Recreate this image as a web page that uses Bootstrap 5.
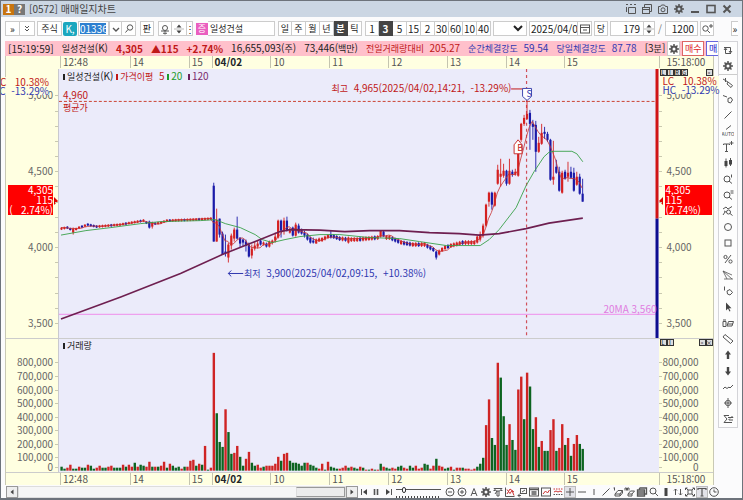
<!DOCTYPE html>
<html lang="ko">
<head>
<meta charset="utf-8">
<meta name="viewport" content="width=device-width, initial-scale=1">
<title>[0572] 매매일지차트</title>
<link href="https://cdn.jsdelivr.net/npm/bootstrap@5.3.0/dist/css/bootstrap.min.css" rel="stylesheet">
<style>
body{font:10px/12px "Liberation Sans Narrow","Noto Sans CJK KR",sans-serif;color:#222;background:#fbfbfc;border:1px solid #6d737b;border-bottom-width:2px;overflow:hidden}
.ko{font-size:9px}
button,input,select{font:inherit;color:inherit;padding:0;margin:0;border-radius:0;min-width:0}
button{background:none;border:0;display:inline-flex;align-items:center;justify-content:center}
svg{display:block;flex:none}
.ic{width:12px;height:12px;fill:none;stroke:#555;stroke-width:1}
.ic .f{fill:#444;stroke:none}
.titlebar{background:#cbd6e3;height:16px;padding:0 9px 0 2px;color:#444}
.titlebar .num{width:11px;height:11px;background:#c87510;color:#fff;font-weight:bold}
.titlebar .hlp{background:#777}
.toolbar{height:24px;padding:0 4px 1px 4px}
.box{border:1px solid #ccc;background:#fff;height:15px;flex:none}
.w13{width:13px}.w14{width:14px}.w15{width:15px}
.seg button{flex:none;width:14px;height:15px;border:1px solid #ccc;border-left-width:0;background:#fff}
.seg button:first-child{border-left-width:1px}
.seg button.on{background:#444;color:#fff;font-weight:bold;border-color:#444}
.infobar{background:#ffc0cb;height:15px;padding:0 1px 0 3px;gap:8px;white-space:nowrap}
.red{color:#c01818}.blue{color:#3038b0}
.chart{display:grid;grid-template-columns:52px 1fr 54px;grid-template-rows:13px 270fr 134fr 13px;background:#ffffe1;border:solid #c9c9b4;border-width:0 1px}
.chart>div{position:relative;min-width:0;min-height:0}
.plot{background:#ebebfa;border-left:1px solid #c9c9cf}
.plot>svg{position:absolute;width:100%;height:100%;left:0;top:0}
.pane2{border-top:1px solid #ccc}
.tick{position:absolute;line-height:12px;padding-left:2px;border-left:1px solid #c4c4b0;color:#555;white-space:nowrap}
.top-t .tick{top:0}
.pl{position:absolute;transform:translateY(-50%);color:#666;white-space:nowrap}
.lft .pl{right:5px}.rgt .pl{left:8px}.rgt.vol .pl{left:auto;right:14px}
.tk{position:absolute;height:1px;width:3px;background:#c9c9b0}
.lft .tk{right:0}.rgt .tk{left:0}
.note{position:absolute;white-space:nowrap}
.lchc{position:absolute;top:8px;background:#ffffe1;line-height:9px;z-index:2;white-space:pre}
.lft .lchc{right:9px}.rgt .lchc{left:4px;top:7px}
.pbox{position:absolute;top:116px;background:red;color:#fff;line-height:10px;z-index:2;white-space:pre}
.lft .pbox{left:2px;right:5px;text-align:right}.rgt .pbox{left:6px;right:1px;padding-left:1px}
.arr{position:absolute;top:128px;border:solid transparent;border-width:4px 0}
.lft .arr{right:0;border-left:4px solid #d00}.rgt .arr{left:0;border-right:4px solid #d00}
.mini{position:absolute;top:0;left:1px;right:0}
.mini button{width:7px;height:7px;background:#ddd;border:1px solid #333;font-size:6px;line-height:5px;color:#111}
.lg{width:2px;height:6px;display:inline-block;margin-right:2px}
.botbar{height:13px;padding-left:1px}
.botbar button.tl{width:12px;height:12px;flex:none}
.botbar .on{background:#e2e2e8;border:1px solid #bbb}
.sb{background:#eee;border:1px solid #999;width:12px;height:12px}
.track{background:#f6f6f6;border:1px solid #ddd;height:12px}
.thumb{width:49px;background:#ececec;border:1px solid #999;border-left-color:#ddd}
.zoomr{width:45px;height:12px;appearance:none;background:repeating-linear-gradient(90deg,#444 0 1px,transparent 1px 3px) 0 10px/100% 2px no-repeat,linear-gradient(#555,#555) 0 3px/100% 1px no-repeat}
.zoomr::-webkit-slider-thumb{appearance:none;width:4px;height:6px;border:1px solid #333;background:#fff;border-radius:2px;margin-top:-4px}
.side{width:21px;border:1px solid #d4d4d8;background:#fdfdfd;align-self:flex-start;margin-left:4px}
.side button{height:16px;width:100%}
.sep{height:1px;background:#ccc}
</style>
<script src="https://cdn.jsdelivr.net/npm/bootstrap@5.3.0/dist/js/bootstrap.bundle.min.js"></script>
</head>
<body class="vh-100 d-flex flex-column">
<header class="titlebar d-flex align-items-center">
  <span class="num d-flex align-items-center justify-content-center">1</span>
  <span class="num hlp d-flex align-items-center justify-content-center">?</span>
  <span class="ms-1">[0572] 매매일지차트</span>
  <span class="ms-auto d-flex gap-1" id="wintools"></span>
</header>

<div class="toolbar d-flex align-items-center">
  <button class="box w15" aria-label="펼치기">»</button>
  <button class="box w15 border-start-0" aria-label="접기" data-i="chev2"></button>
  <button class="box ko" style="--n:0" id="kind">주식</button>
  <button class="kbtn" id="mk">K,</button>
  <input class="box" id="code" value="013360" aria-label="종목코드">
  <button class="box w13" aria-label="종목 목록" data-i="down"></button>
  <button class="box w14 border-start-0" aria-label="종목 검색" data-i="search"></button>
  <button class="box w14 ko g1">판</button>
  <button class="box w14 g1" aria-label="순환" data-i="cycle"></button>
  <button class="box w15 border-start-0" aria-label="위아래" data-i="updn"></button>
  <button class="box dots border-start-0" aria-label="더보기">⋮</button>
  <span class="jeung ko">증</span>
  <input class="box ko" id="nm" value="일성건설" aria-label="종목명">
  <div class="seg d-flex ko" id="periods"></div>
  <div class="seg d-flex" id="mins"></div>
  <select class="box" id="msel" aria-label="분"><option>3</option></select>
  <input class="box" id="date" value="2025/04/02" aria-label="날짜">
  <button class="box w14 border-start-0" aria-label="달력" data-i="cal"></button>
  <button class="box w14 ko g0">당</button>
  <input class="box text-end num-in" value="179" aria-label="표시 봉수">
  <button class="box spin border-start-0" aria-label="봉수 조절" data-i="updn"></button>
  <span class="slash">/</span>
  <input class="box text-end tot" value="1200" aria-label="전체 봉수">
  <button class="box w14 g0" aria-label="추가 조회" data-i="searchp"></button>
  <button class="box ms-auto more" aria-label="더보기">»</button>
</div>

<main class="d-flex flex-grow-1 ps-1" style="min-height:0">
  <div class="d-flex flex-column flex-grow-1" id="work">
    <div class="infobar d-flex align-items-center">
      <span>[15:19:59]</span><span><span class="ko">일성건설</span>(K)</span>
      <b class="red">4,305</b><b class="red">▲115</b><b class="red">+2.74%</b>
      <span>16,655,093(<span class="ko">주</span>)</span><span>73,446(<span class="ko">백만</span>)</span>
      <span class="red"><span class="ko">전일거래량대비</span>&nbsp; 205.27</span>
      <span class="blue"><span class="ko">순간체결강도</span>&nbsp; 59.54</span>
      <span class="blue"><span class="ko">당일체결강도</span>&nbsp; 87.78</span>
      <span class="ms-auto d-flex align-items-center acts"><span>[3<span class="ko">분</span>]</span>
      <button class="box w13" aria-label="설정" data-i="gear"></button>
      <button class="box ord ko buy">매수</button><button class="box ord ko sell">매도</button></span>
    </div>
    <div class="chart flex-grow-1">
      <div></div><div class="top-t xaxis"></div><div class="top-t"><span class="tick clock">15:18:00</span></div>
      <div class="lft price"><div class="lchc text-end"><span class="red">LC   10.38%</span><br><span class="blue">HC  -13.29%</span></div>
        <div class="pbox">4,305
115
(   2.74%)</div><i class="arr"></i></div>
      <div class="plot">
        <svg id="pc" viewBox="58 67 602 270" preserveAspectRatio="none" role="img" aria-label="일성건설 3분봉 가격 차트"></svg>
        <div class="note leg1"><i class="lg k1"></i><span class="ko">일성건설</span>(K) <i class="lg k2"></i><span class="red"><span class="ko">가격이평</span> &nbsp;5</span> <i class="lg k3"></i><span class="gr">20</span> &nbsp;<i class="lg k4"></i><span class="pu">120</span></div>
        <div class="note avg red">4,960<br><span class="ko">평균가</span></div>
        <div class="note hi red"><span class="ko">최고</span> &nbsp;4,965(2025/04/02,14:21, &nbsp;-13.29%)</div>
        <div class="note lo blue"><span class="ko">최저</span> &nbsp;3,900(2025/04/02,09:15, &nbsp;+10.38%)</div>
        <div class="note ma">20MA 3,560</div>
        <div class="note mkr s">S</div><div class="note mkr b">B</div>
      </div>
      <div class="rgt price"><div class="mini d-flex"><button>L</button><button>I</button><button>R</button><button>G</button><button class="ms-auto" aria-label="최대화">▫</button></div>
        <div class="lchc"><span class="red">LC   10.38%</span><br><span class="blue">HC  -13.29%</span></div>
        <div class="pbox">4,305
115
(2.74%)</div><i class="arr"></i></div>
      <div class="lft vol pane2"></div>
      <div class="plot pane2"><svg id="vc" viewBox="58 337 602 134" preserveAspectRatio="none" role="img" aria-label="거래량 차트"></svg>
        <div class="note leg2 ko"><i class="lg k1"></i>거래량</div></div>
      <div class="rgt vol pane2"><div class="mini d-flex"><button>L</button><button>I</button><button class="ms-auto" aria-label="최대화">▫</button><button aria-label="닫기">×</button></div></div>
      <div class="bline"></div><div class="top-t xaxis bline"></div><div class="top-t bline"><span class="tick clock">15:18:00</span></div>
    </div>
    <div class="botbar d-flex align-items-center">
      <button class="sb" aria-label="왼쪽" data-i="tl"></button>
      <div class="track flex-grow-1 d-flex justify-content-end"><div class="thumb"></div></div>
      <button class="sb" aria-label="오른쪽" data-i="tr"></button>
      <div class="d-flex play" id="play"></div>
      <input type="range" class="zoomr" min="0" max="100" value="15" aria-label="확대">
      <div class="d-flex justify-content-between tools" id="tools"></div>
    </div>
  </div>
  <nav class="side d-flex flex-column" id="side" aria-label="그리기 도구"></nav>
  <div class="rpad"></div>
</main>

<style>
#kind{width:25px;margin-left:2px}
.kbtn{width:14px;height:14px;background:#1ba7bf;color:#fff;border-radius:2px;margin:0 1px;flex:none}
#code{width:31px;padding-left:1px;color:#0a3d8c}
#code{background:linear-gradient(#2d7fd0,#2d7fd0) 1px 1px/26px 11px no-repeat #fff;color:#fff}
.g1{margin-left:4px}.g0{margin-left:2px}
.dots{width:6px}
.jeung{background:#ea5fc0;color:#fff;width:12px;height:12px;line-height:12px;text-align:center;margin-left:3px;flex:none}
#nm{width:67px;padding-left:2px;border-left:0}
#periods{margin-left:3px}#mins{margin-left:3px}
#msel{width:34px;margin-left:2px;padding-left:17px}
#date{width:49px;margin-left:2px;padding-left:1px}
.num-in{width:34px;margin-left:2px;padding-right:3px}.spin{width:11px}
.slash{width:10px;text-align:center;color:#777;flex:none}
.tot{width:33px;padding-right:3px}
.more{width:7px;border-right:0}
.acts{gap:2px}
.ord{width:22px}.buy{color:#d22;border-color:#d66}.sell{color:#22c;border-color:#66d}
#work{min-width:0}
.rpad{width:4px}
.clock{left:0;padding-left:7px}
.bline{border-top:1px solid #ccc}
.leg1{left:4px;top:1px}.leg2{left:4px;top:1px}
.k1{background:#222}.k2{background:#c01818}.k3{background:#1c9c2c}.k4{background:#6a1c5c}
.gr{color:#1c9c2c}.pu{color:#7a2c6c}
.avg{left:4px;top:20px}
.hi{right:147px;top:13px}.lo{left:185px;top:198px}
.ma{right:2px;top:234px;color:#e07ce0}
.mkr{width:9px;text-align:center;font-size:9px;line-height:9px}
.s{left:77.7%;top:20px;color:#3038b0}.b{left:76.2%;top:74px;color:#c01818}
.play{width:38px;justify-content:space-around}
.tools{width:270px;margin-left:3px;flex:none}
</style>

<script>
const I={
chev2:'<path d="M4 3l2 2 2-2M4 6l2 2 2-2"/>',
down:'<path d="M3 5l3 3 3-3" stroke-width="1.4"/>',
search:'<circle cx="7" cy="4.5" r="2.7"/><path d="M5 6.5L2.5 9.5"/>',
searchp:'<circle cx="4.5" cy="5.5" r="2.7"/><path d="M6.5 7.5L9 10M8 3h4M10 1v4"/>',
cycle:'<circle cx="6" cy="5" r="2.5"/><path d="M2 8h8M6 8v3M4 10l2 1 2-1"/>',
updn:'<path class="f" d="M3.500 4.500L6 1.500 8.500 4.500zM3.500 7.500L6 10.500 8.500 7.500z"/><path d="M1 6h10" stroke="#bbb"/>',
cal:'<rect x="1.500" y="2" width="9" height="8"/><path d="M1.500 4.500h9M4 7h4"/>',
gear:'<circle cx="6" cy="6" r="2.500" stroke-width="2"/><path stroke-width="1.500" d="M6 1v2M6 9v2M1 6h2M9 6h2M2.500 2.500l1.500 1.500M8 8l1.500 1.500M9.500 2.500L8 4M4 8L2.500 9.500"/>',
tl:'<path class="f" d="M7.500 3.500v5L4.500 6z"/>',tr:'<path class="f" d="M4.500 3.500v5L7.500 6z"/>',
pin:'<path d="M3.500 4.500h7v6h-7zM1 1.500h2M5 1.500h2M9 1.500h2M1.500 4v5"/>',
wins:'<rect x="1.500" y="4.500" width="7" height="6"/><path d="M3.500 4.500v-3h7v7h-2M1.500 6.500h7"/>',
cam:'<path d="M1.500 3.500h2l1-1.500h3l1 1.500h2v7h-9z"/><circle cx="6" cy="6.800" r="2"/>',
min:'<path d="M2 9h8" stroke-width="2"/>',max:'<rect x="2" y="2.500" width="8" height="7" stroke-width="1.600"/>',x:'<path d="M2.500 2.500l7 7M9.500 2.500l-7 7" stroke-width="2"/>',
first:'<path d="M3.500 3v6"/><path class="f" d="M9 3v6L5 6z"/>',pause:'<path d="M4.500 3v6M7.500 3v6" stroke-width="1.600"/>',next:'<path d="M8.500 3v6"/><path class="f" d="M3 3v6l4-3z"/>',
minus:'<circle cx="6" cy="6" r="4"/><path d="M4 6h4"/>',plus:'<circle cx="6" cy="6" r="4"/><path d="M4 6h4M6 4v4"/>',
A:'<path d="M3 10L6 2.500 9 10M4 7.500h4"/>',
filt:'<path d="M2 2.500h8L7.500 5H4.500zM5 5l-2 3M7 5v5h-2V5M1.500 4.500h2M8.500 4.500h2"/>',
rchart:'<path d="M1.500 1.500v9h9"/><path stroke="#c33" d="M3 3.500l3 4 2-3 2 5M3 8l3-5 4 3"/>',
wback:'<rect x="4.500" y="2.500" width="6" height="5"/><path d="M5 9.500H2M2 9.500l2-2M2 9.500l2 2M6 6l3-2"/>',
win:'<rect x="1.500" y="2" width="9" height="8"/><path d="M1.500 3.500h9M3.500 6h5M3.500 8h5" stroke-width="1.300"/>',
pic:'<rect x="1.500" y="2" width="9" height="8"/><path stroke="#c33" d="M3 8l2.500-3 2 2L9.500 4"/>',
dashes:'<path stroke="#c33" stroke-dasharray="1.500 1" d="M1.500 3h9"/><path stroke-dasharray="1.500 1" d="M1.500 8.500h9"/><path stroke="#c33" d="M2 6l2-1 2 1 2-1 2 1"/>',
cross:'<path d="M2 6h8M6 2v8"/>',h:'<path d="M2 6h8"/>',v:'<path d="M6 3v6"/>',d:'<path d="M2.500 9.500l7-7"/>',
er:'<path d="M3 8l3-3.500h4.500L8 8zM3 8v2h5V8M8 10l2.500-3V4.500M2.500 1.500v3M1.500 2h1"/>',
er2:'<path d="M4 8l2.500-3h4L8 8zM4 8v2h4V8M1 4.500V2h1.500v2.500M3.500 4.500V2H5v2.500"/>',
stack:'<path d="M3.500 2h7v6h-2M3.500 4v-2M1.500 4h7v6h-7zM1.500 6h7M1.500 8h7" stroke-width="1.300"/>',
mag:'<circle cx="5" cy="5" r="3"/><path d="M7.200 7.200L10 10"/>',
bar:'<rect class="f" x="4.500" y="2" width="3" height="8"/>',
sw:'<path d="M3.500 9V3M2 4.500L3.500 3 5 4.500M8.500 3v6M7 7.500L8.500 9 10 7.500"/>',
fit:'<rect x="4" y="4" width="4" height="4"/><path d="M1.500 4V2h2M8.500 2h2v2M1.500 8v2h2M8.500 10h2V8M2 2l2 2M10 2L8 4M2 10l2-2M10 10L8 8"/>',
T:'<path d="M2 4V2.500h8V4M6 2.500v7.500M4.500 10h3" stroke-width="1.200"/>',clk:'<circle cx="6" cy="6" r="4.300"/><path d="M6 3.500V6h2.500"/>',
rot:'<path d="M2 3.500h6.500V8M10 7L8.500 9 7 7M9 9.500H3.500V5M2 6l1.500-2L5 6"/>',
p1:'<path d="M1 2l5 3M3.500 1v4M6 5l4.500 3.500-1.500 2L5 7z"/>',p2:'<path d="M1 2.500l4 1.500M6 5.500l3-1 1.500 2.500-2 3-2.500-1z"/>',
auto:'<path d="M4 4.500l5-4"/><text x="6" y="10.500" font-size="5" text-anchor="middle" stroke="none" fill="#444">AUTO</text>',
tp:'<path d="M1.500 4V3h6v1M4.500 3v7.500M3 10.500h3M9.500 0v4M7.500 2h4"/>',
cand:'<path d="M4 1.500v9M8.500 1v8"/><path class="f" d="M2.500 4h3v5h-3zM7 3h3v4.500H7z"/>',
m1:'<circle cx="5" cy="6" r="3"/><path d="M7 8l3 2.500M9.500 1.500v3"/>',m2:'<circle cx="5" cy="6" r="3"/><path d="M7 8l3 2.500M8.500 2h3M8.500 4h3"/>',
m3:'<path d="M1 4l3-2 2 2 4-2.500M1 10l2-3"/><circle cx="6.500" cy="7" r="2"/><path d="M8 8.500l2.500 2M2 6l2 1"/>',
circ:'<circle cx="6" cy="6" r="3.500"/>',sq:'<rect x="3" y="3" width="6" height="6"/>',
pct:'<path d="M3 10l6-8"/><circle cx="3.500" cy="4" r="1.600"/><circle cx="8.500" cy="8.500" r="1.600"/>',
fan:'<path d="M1 2l9 8M1 2l4 8M1 2l9 4M2 10h9" stroke-width=".8"/>',
l1:'<path d="M2.500 1.500v4M5 6l3-1.500 2.500 3L8 10 5.500 9z"/>',
ptr:'<path class="f" d="M4 1.500v8l2-2 1.500 3 1-.5L7 7.200h2.500z"/>',
er3:'<path d="M1 4.500h3v5H1zM1 3h3M5 9l1.500-4.500h5L10 9zM6 7h5"/>',
rul:'<path d="M3 1.500L11 8 8.500 10.500 1 4z"/>',
up:'<path class="f" d="M6 1.500l3 4H7.200V10H4.800V5.500H3z"/>',dn:'<path class="f" d="M6 10.500l3-4H7.200V2H4.800v4.500H3z"/>',
wave:'<path d="M1 8l2-2 2 1.500 2-1.500 1 1 3-3"/>',phi:'<rect x="3.500" y="3.500" width="5" height="5" rx="2"/><path d="M6 1v10M2 6h8"/>',
sig:'<path d="M7 2.500H2L5 6 2 9.500h8M6 4.500h5M9.500 3l1.500 1.500M11 7H7M8 5.500L6.500 7"/>'};
const svg=n=>`<svg class="ic" viewBox="0 0 12 12" aria-hidden="true">${I[n]}</svg>`;
document.querySelectorAll('[data-i]').forEach(b=>b.innerHTML=svg(b.dataset.i));
const btns=(id,l,cls='')=>document.getElementById(id).innerHTML=l.split(' ').map(n=>n=='|'?'<div class="sep"></div>':`<button class="${cls}${/\*/.test(n)?' on':''}" aria-label="${n.replace('*','')}">${svg(n.replace('*',''))}</button>`).join('');
btns('wintools','pin wins cam gear min max x');
btns('play','first pause next','tl');
btns('tools','minus plus A gear filt rchart wback win pic dashes cross* h v d er er2 stack mag bar sw fit T* clk','tl');
btns('side','rot gear | p1 p2 d auto tp cand m1 m2 m3 circ sq pct fan l1 ptr er3 rul up dn wave phi sig');
const seg=(id,l,on)=>document.getElementById(id).innerHTML=l.split(' ').map(t=>`<button class="${t==on?'on':''}">${t}</button>`).join('');
seg('periods','일 주 월 년 분 틱','분');seg('mins','1 3 5 15 2 30 60 10 40','3');

/* time axis */
const X0=60,P=2.94,px=i=>X0+P*i,pct=x=>((x-58)/602*100).toFixed(2)+'%';
document.querySelectorAll('.xaxis').forEach(a=>a.innerHTML=[[60,'12:48'],[130,'14'],[189,'15'],[212,'<b class="text-dark">04/02</b>'],[271,'10'],[330,'11'],[389,'12'],[448,'13'],[507,'14'],[565,'15']].map(([x,t])=>`<span class="tick" style="left:${pct(x)}">${t}</span>`).join(''));

/* value axes */
const py=p=>245.5-(p-4000)*.152;
document.querySelectorAll('.price').forEach(a=>{let h='';for(let p=3500;p<=5000;p+=100){const t=((py(p)-67)/270*100).toFixed(2);h+=`<i class="tk" style="top:${t}%"></i>`;if(p%500==0)h+=`<span class="pl" style="top:${t}%">${p.toLocaleString('en')}</span>`}a.insertAdjacentHTML('beforeend',h)});
document.querySelectorAll('.vol').forEach(a=>{let h='';for(let v=0;v<9;v++){const y=v?470-v*13.7:466,t=((y-337)/134*100).toFixed(2);h+=`<i class="tk" style="top:${t}%"></i><span class="pl" style="top:${t}%">${(v*100000).toLocaleString('en')}</span>`}a.insertAdjacentHTML('beforeend',h)});

/* candles: [index, colour, body top, body bottom, wick top, wick bottom] */
const C=[];
const anchors=[[0,227],[2,226],[4,229],[6,226],[9,223],[12,225],[20,223],[28,219],[30,223],[34,221],[36,219],[45,218],[51,217]];
const lerp=(a,i)=>{for(let k=1;k<a.length;k++)if(i<=a[k][0]){const[p,q]=[a[k-1],a[k]];return p[1]+(q[1]-p[1])*(i-p[0])/(q[0]-p[0])}return a.at(-1)[1]};
const flat=(a,s,e,r)=>{for(let i=s;i<=e;i++){const y=lerp(a,i);const up=lerp(a,Math.min(i+1,e))<=y?(i%5!=2):(i%4==0);C[i]=[up?'r':'b',y-r/2,y+r/2,y-r*.8,y+r*.8]}};
flat(anchors,0,51,1.8);
C[4]=['r',227,231,226,233];C[30]=['b',220,226,219,227];C[31]=['r',221,225,220,227];
flat([[89,238],[91,235],[93,235],[95,237],[98,238],[101,238],[108,236],[112,236],[116,241],[120,243],[124,243],[127,248],[129,250],[131,246],[133,244],[137,241],[141,241]],89,141,3);
`52b184,240,181,240 53r218,240,207,240 54b217,233,217,236 55b232,253,230,253 56b250,252,233,255 57r243,256,241,261 58r234,244,232,248 59r228,237,226,240 60b228,237,215,238 61b236,242,236,246 62b238,241,237,245 63b240,244,238,250 64b243,255,241,256 65r247,254,243,257 66r244,247,240,249 67r242,245,239,247 68b239,243,238,244 69r241,243,240,244 70b242,245,241,246 71r240,245,239,246 72r239,241,238,243 73r235,239,231,241 74r219,236,218,237 75b219,229,218,236 76r219,229,216,233 77b219,229,215,230 78r229,231,226,232 79b226,234,225,235 80r223,234,221,235 81b224,231,222,232 82b228,232,227,233 83b231,234,229,236 84b233,238,232,239 85b236,241,235,242 86b239,241,236,242 87r238,242,237,242 88r237,240,236,240 92b233,236,229,237 98r236,241,235,242 109r229,235,229,236 110b230,235,229,235 128b250,256,249,258 129r249,253,248,254 142r235,241,234,242 143r233,238,230,240 144r224,234,222,236 145r203,224,202,225 146r191,200,190,205 147b191,203,190,208 148r191,204,190,205 149r168,182,163,183 150r172,175,157,185 151r169,174,162,176 152b169,182,168,184 153r169,182,157,183 154b170,173,168,175 155r170,173,167,174 156r152,174,150,175 157r122,138,121,140 158r116,122,113,124 159r112,117,99,118 160b111,122,108,148 161b122,125,118,138 162b123,150,119,170 163r141,150,135,151 164r131,142,122,143 165b130,132,125,137 166b132,138,130,140 167b138,178,137,179 168r175,178,139,183 169b165,171,158,172 170b170,189,165,190 171r171,191,169,192 172b170,177,168,178 173r171,175,160,180 174b170,176,165,177 175b171,189,166,190 176r175,183,170,184 177b175,192,172,193 178b192,200,177,200`.split(' ').forEach(s=>{const m=s.match(/^(\d+)([rb])(.*)$/);C[+m[1]]=[m[2],...m[3].split(',').map(Number)]});
const col={r:'#d42020',b:'#1a1aa8'};
let s='<path d="M58 99.500H657" stroke="#c43" stroke-dasharray="3 2"/><path d="M527.500 67V337" stroke="#d0505a" stroke-dasharray="3 3" stroke-width="1.200"/><path d="M58 313H657" stroke="#eea0ee" stroke-width="1.200"/>';
C.forEach((c,i)=>{const x=px(i)+.5;s+=`<path d="M${x} ${c[3]}V${c[4]}" stroke="${col[c[0]]}" stroke-width=".9"/><rect x="${x-1.1}" y="${c[1]}" width="2.200" height="${Math.max(1,c[2]-c[1])}" fill="${col[c[0]]}"/>`});
const close=C.map(c=>c[0]=='r'?c[1]:c[2]);
const ma5=close.map((_,i)=>{const w=close.slice(Math.max(0,i-4),i+1);return px(i).toFixed(1)+','+(w.reduce((a,b)=>a+b)/w.length).toFixed(1)}).join(' ');
s+=`<polyline points="${ma5}" fill="none" stroke="#c83030" stroke-width=".8"/>
<polyline points="60,233.500 85,229 110,226 140,222 160,220 200,219 215,218 225,222 240,226 255,233 262,238 272,241 285,238 300,235 320,233 340,233 370,236 400,237 420,240 447,244 481,244 490,238 500,228 517,206 527,184 535,170 545,155 550,150.500 555,149.500 573,149.500 578,152 584,160" fill="none" stroke="#38a048" stroke-width=".9"/>
<polyline points="60,317.500 120,295.500 180,272 222,253 255,240 280,230 290,228 320,228.500 345,230 370,229 400,229 430,231 460,232 480,233.500 500,232 527,227 550,221.500 584,216.500" fill="none" stroke="#6e1f50" stroke-width="1.600"/>
<path d="M657 67h3v150h-3z" fill="#d01414"/><path d="M657 217h3v120h-3z" fill="#0c0c90"/>
<path d="M512 87h12" stroke="#c01818"/><path d="M523.500 86.500h9v8l-4.500 4-4.500-4z" fill="#fff" stroke="#4048b0"/><path d="M515 152v-9l4-5 4 5v9z" fill="#fff" stroke="#c83030"/>
<path d="M243 272h-15M231 269l-3 3 3 3" fill="none" stroke="#3038b0"/>`;
document.getElementById('pc').innerHTML=s;

/* volume bars */
const V=[4,2,3,6,2,2,4,3,3,6,5,2,3,5,3,3,4,5,3,3,3,6,4,6,4,8,4,6,5,4,9,4,4,4,5,9,3,7,5,3,4,2,4,4,10,11,5,7,6,25,1,3,119,58,29,24,62,39,17,18,25,14,5,12,19,8,5,6,3,4,5,5,5,7,14,10,17,18,10,8,8,7,5,8,8,6,5,3,2,7,1,9,4,3,2,2,3,5,3,4,3,2,4,3,1,1,2,1,1,7,4,3,2,3,2,4,5,3,2,5,3,5,2,3,7,6,2,5,12,5,4,2,3,4,1,3,3,3,2,2,1,2,4,7,13,46,72,33,26,109,94,55,26,47,31,21,82,95,52,99,85,42,54,24,30,20,20,41,52,20,23,47,26,33,15,27,36,27,22];
const K='ggrrggrggrggrrggrrgggrgrrgrggrrgrgrrgrgggrgrrrgrgrgrrgggrggrrggrrggrrgrrrrrgrrggggggrgggrrgrgggrrrgrggrgrgrgrgrggrrggrrggrrrggrrgrrggrgrrgrrrrggggrrrr'.slice(0,145)+'rrggrgggrggrrgrggrgrggrrgrrgrgrrgg';
document.getElementById('vc').innerHTML=V.map((v,i)=>`<rect x="${(px(i)-.6).toFixed(2)}" y="${470-v}" width="2.400" height="${v}" fill="${K[i]=='g'?'#0d6420':'#cf2424'}"/>`).join('');
</script>
</body>
</html>
